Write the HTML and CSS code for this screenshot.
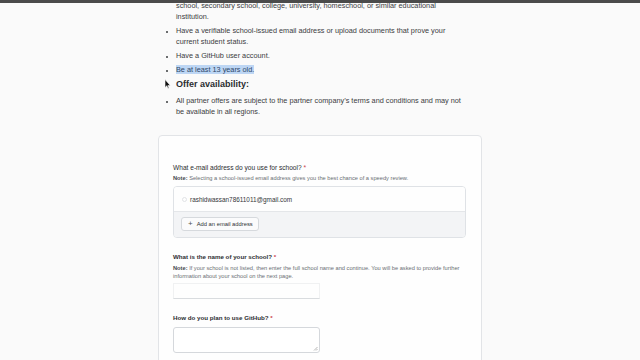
FILE: index.html
```html
<!DOCTYPE html>
<html>
<head>
<meta charset="utf-8">
<link rel="stylesheet" href="styles.css">
</head>
<body>
<div class="topbar"></div>
<main class="page">
  <ul class="reqs first">
    <li>Be currently enrolled in a degree or diploma granting course of study such as a high school, secondary school, college, university, homeschool, or similar educational institution.</li>
    <li>Have a verifiable school-issued email address or upload documents that prove your current student status.</li>
    <li>Have a GitHub user account.</li>
    <li><span class="sel">Be at least 13 years old.</span></li>
  </ul>
  <h3 class="subhead">Offer availability:
    <svg class="cursor" width="7" height="10" viewBox="0 0 7 10"><path d="M1 0.5 L1 8.5 L2.8 6.8 L4 9.5 L5 9 L3.9 6.4 L6.3 6.4 Z" fill="#111" stroke="#fff" stroke-width="0.6"/></svg>
  </h3>
  <ul class="reqs">
    <li>All partner offers are subject to the partner company’s terms and conditions and may not be available in all regions.</li>
  </ul>

  <section class="card">
    <div class="field">
      <label class="label">What e-mail address do you use for school? <span class="req">*</span></label>
      <p class="note"><b>Note:</b> Selecting a school-issued email address gives you the best chance of a speedy review.</p>
      <div class="emailbox">
        <div class="emailrow"><span class="radio"></span><span>rashidwassan78611011@gmail.com</span></div>
        <div class="emailfoot"><button class="btn"><span class="plus">+</span>Add an email address</button></div>
      </div>
    </div>
    <div class="field school">
      <label class="label bold">What is the name of your school? <span class="req">*</span></label>
      <p class="note two"><b>Note:</b> If your school is not listed, then enter the full school name and continue. You will be asked to provide further information about your school on the next page.</p>
      <div class="input"></div>
    </div>
    <div class="field plan">
      <label class="label bold">How do you plan to use GitHub? <span class="req">*</span></label>
      <div class="textarea"><svg class="grip" width="5" height="5" viewBox="0 0 5 5"><path d="M4.5 1 L1 4.5 M4.5 3 L3 4.5" stroke="#999" stroke-width="0.7"/></svg></div>
    </div>
  </section>
</main>
</body>
</html>
```
FILE: styles.css
```css
* { box-sizing: border-box; }
html, body { margin: 0; padding: 0; }
body {
  background: #fafafa;
  font-family: "Liberation Sans", Arial, sans-serif;
  color: #2f3133;
  width: 640px;
  height: 360px;
  overflow: hidden;
}
.topbar {
  position: fixed;
  top: 0; left: 0; right: 0;
  height: 3px;
  background: #4b4b4b;
  z-index: 5;
}
.page {
  margin-left: 158px;
  width: 324px;
}
.reqs {
  margin: 0;
  padding-left: 18px;
  font-size: 7.3px;
  line-height: 11px;
  color: #3a3c3f;
}
.reqs.first { margin-top: -11px; }
.reqs li { padding-right: 20px; }
.reqs li + li { margin-top: 3px; }
.reqs li::marker { font-size: 6px; }
.sel { background: #bdd6f4; color: #2e4868; }
.subhead {
  position: relative;
  margin: 3px 0 4px 18px;
  font-size: 9px;
  line-height: 13px;
  font-weight: bold;
  color: #2b2d30;
}
.cursor {
  position: absolute;
  left: -12px;
  top: 1px;
}
.card {
  margin-top: 18px;
  background: #fefefe;
  border: 1px solid #e2e4e7;
  border-radius: 4px;
  padding: 27px 15px 0 14px;
  height: 240px;
}
.label {
  display: block;
  font-size: 6.6px;
  line-height: 10px;
  color: #2b2d30;
}
.label.bold { font-weight: bold; font-size: 6.2px; }
.req { color: #c9434b; }
.note {
  margin: 1px 0 3px;
  font-size: 5.7px;
  line-height: 8px;
  color: #6a6e73;
}
.note b { color: #45484c; }
.emailbox {
  border: 1px solid #dfe2e6;
  border-radius: 4px;
  overflow: hidden;
  margin-top: 4px;
}
.emailrow {
  height: 24px;
  display: flex;
  align-items: center;
  gap: 3px;
  padding-left: 8px;
  font-size: 6.4px;
  color: #34363a;
  background: #fefefe;
}
.radio {
  width: 5px; height: 5px;
  border: 1px solid #e1e3e6;
  border-radius: 50%;
}
.emailfoot {
  background: #f3f4f6;
  border-top: 1px solid #e4e6e9;
  height: 26px;
  padding: 5px 0 0 7px;
}
.btn {
  height: 14px;
  width: 78px;
  display: flex;
  align-items: center;
  padding: 0 0 0 6px;
  background: #fbfbfc;
  border: 1px solid #d6d9dd;
  border-radius: 3px;
  font-family: inherit;
  font-size: 5.8px;
  color: #2f3133;
}
.plus { font-size: 8px; margin-right: 4px; color: #555; line-height: 1; }
.school { margin-top: 14px; }
.note.two { margin-top: 2px; }
.input {
  width: 147px;
  height: 16px;
  border: 1px solid #f0f1f2;
  border-bottom-color: #d9dcdf;
  margin-top: 1px;
}
.plan { margin-top: 14px; }
.textarea {
  position: relative;
  margin-top: 4px;
  width: 147px;
  height: 26px;
  border: 1px solid #d5d8dc;
  border-radius: 3px;
  background: #fff;
}
.grip { position: absolute; right: 1px; bottom: 1px; }
```
